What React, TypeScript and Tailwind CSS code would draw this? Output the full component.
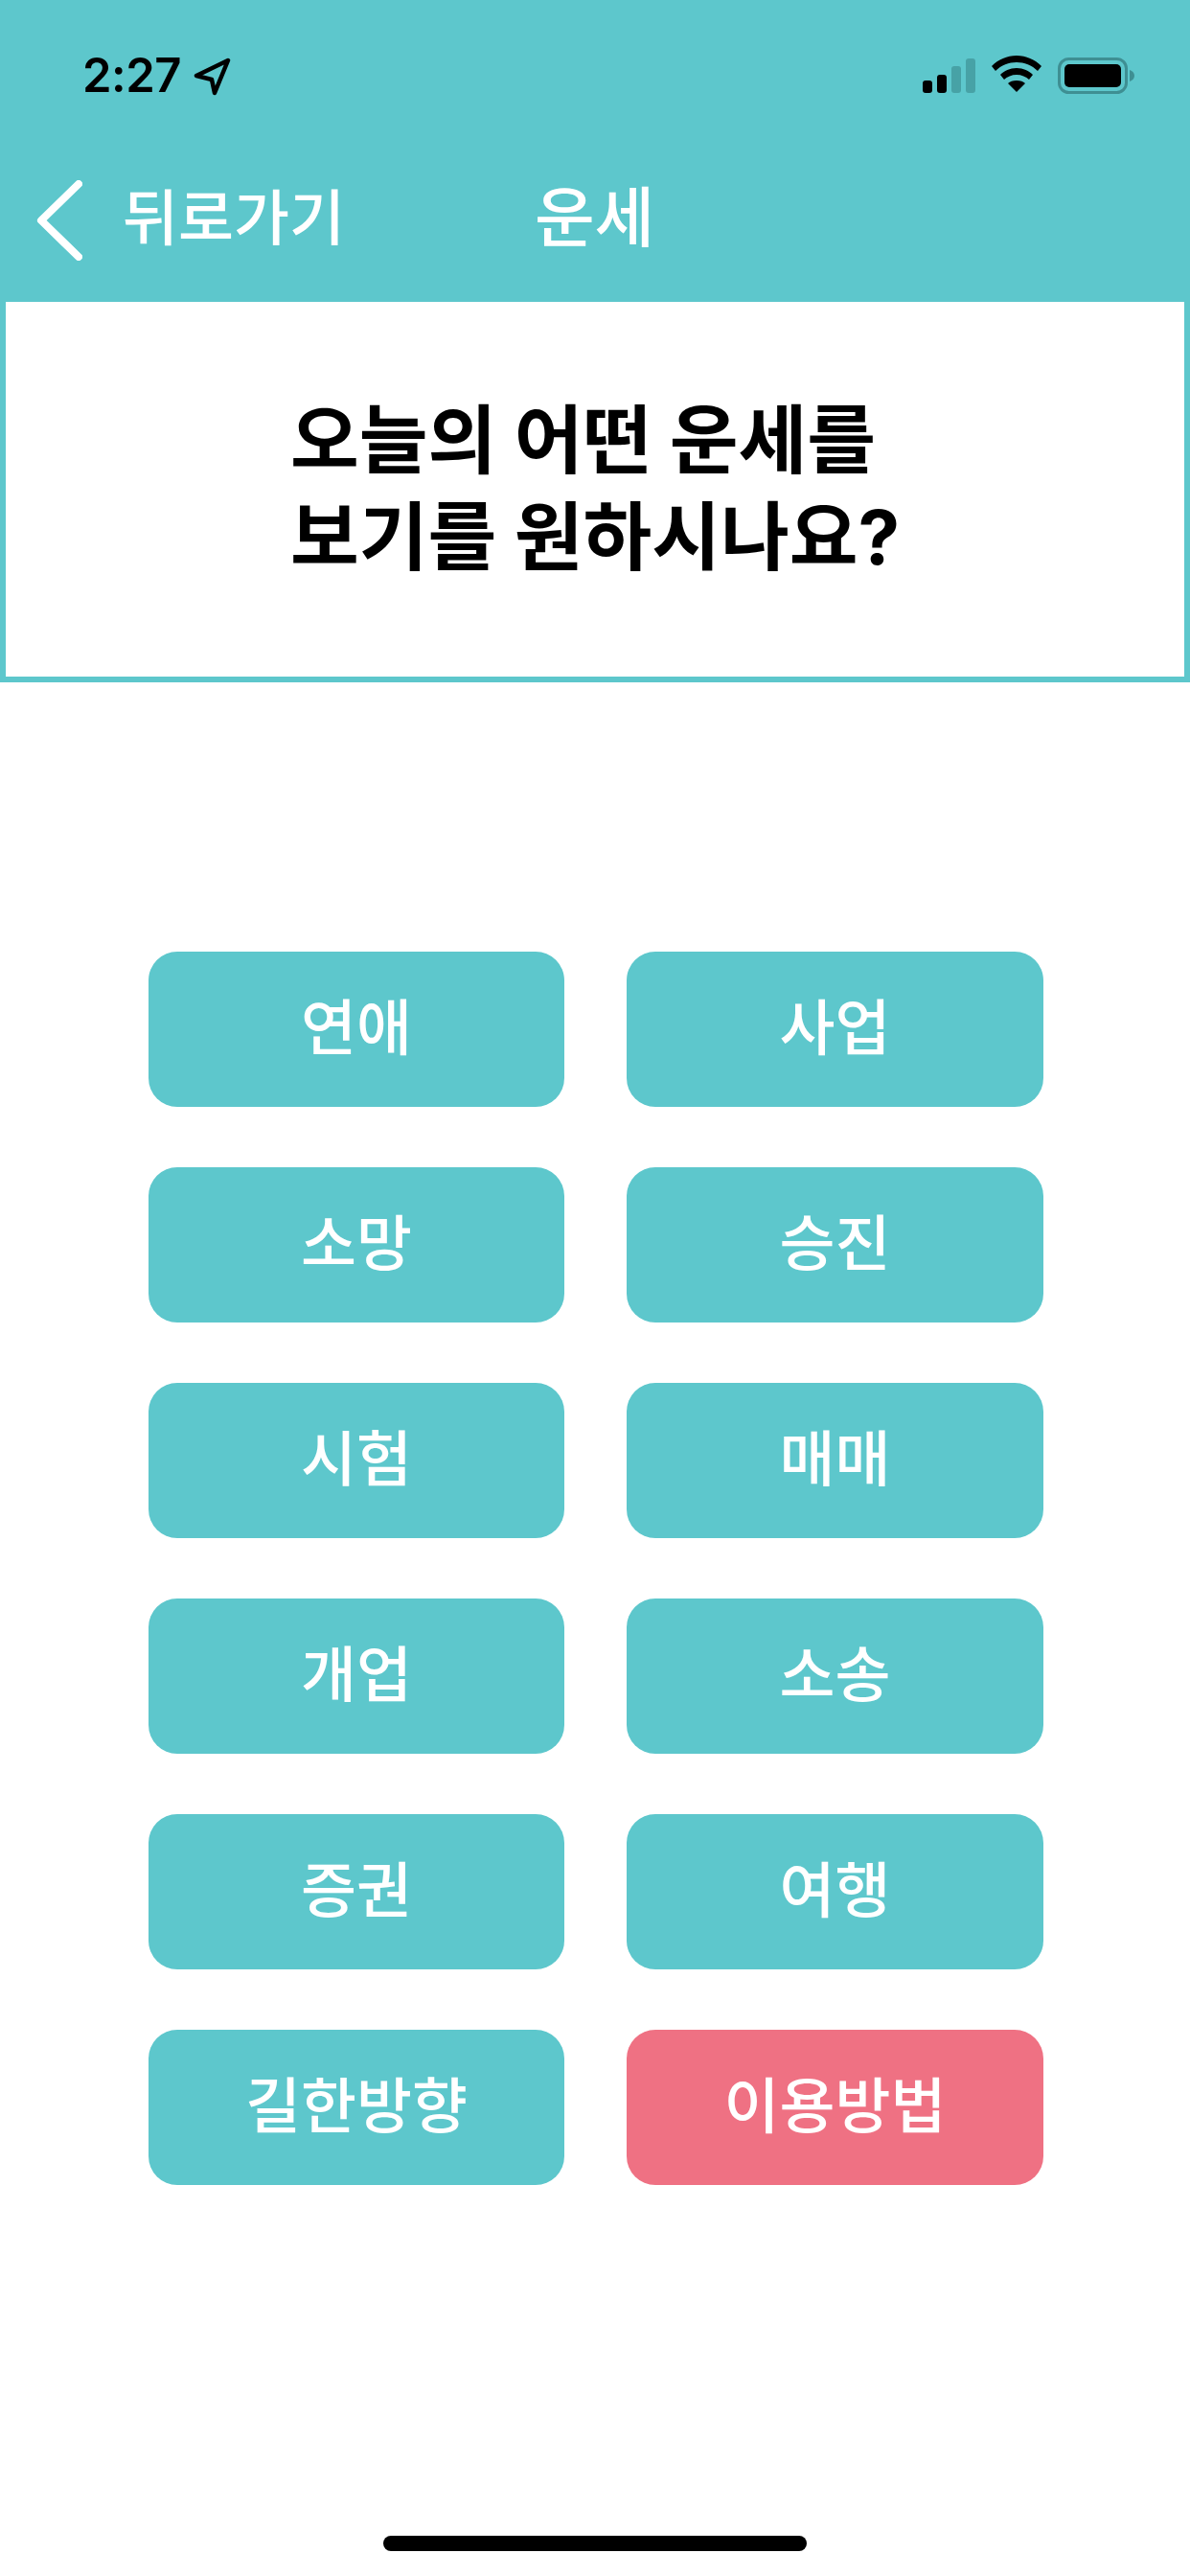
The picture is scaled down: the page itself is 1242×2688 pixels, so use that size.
import { Fragment } from "react";

const FONT = "font-['Inter','Noto_Sans_CJK_KR',sans-serif]";

const rows = [
  ["연애", "사업"],
  ["소망", "승진"],
  ["시험", "매매"],
  ["개업", "소송"],
  ["증권", "여행"],
  ["길한방향", "이용방법"],
];

function StatusIcons() {
  return (
    <div className="flex items-start gap-[17px]">
      {/* signal */}
      <svg width="55" height="36" viewBox="0 0 55 36">
        <rect x="0" y="23" width="10" height="13" rx="3" fill="#000" />
        <rect x="15" y="17" width="10" height="19" rx="3" fill="#000" />
        <rect x="30" y="8" width="10" height="28" rx="3" fill="#47a2a6" />
        <rect x="45" y="0" width="10" height="36" rx="3" fill="#47a2a6" />
      </svg>
      {/* wifi */}
      <svg width="52" height="38" viewBox="0 0 52 38" className="-mt-[3px]">
        <path d="M26 0C16 0 7 4 0 11l4 5C10 10 18 7 26 7s16 3 22 9l4-5C45 4 36 0 26 0Z" fill="#000" />
        <path d="M26 13c-7 0-13 3-17 7l4 5c3-3 8-5 13-5s10 2 13 5l4-5c-4-4-10-7-17-7Z" fill="#000" />
        <path d="M26 26c-4 0-7 1-9 3l9 9 9-9c-2-2-5-3-9-3Z" fill="#000" />
      </svg>
      {/* battery */}
      <svg width="80" height="38" viewBox="0 0 80 38" className="-mt-px">
        <rect x="1.5" y="1.5" width="70" height="35" rx="10" fill="none" stroke="#3e8f93" strokeWidth="3" />
        <rect x="7" y="7" width="59" height="24" rx="5" fill="#000" />
        <path d="M75 13c3 1 5 3 5 6s-2 5-5 6Z" fill="#3e8f93" />
      </svg>
    </div>
  );
}

export default function App() {
  return (
    <div className={`flex h-[2688px] w-[1242px] flex-col bg-white ${FONT}`}>
      <header className="flex h-[315px] flex-col bg-[#5dc7cc]">
        {/* status bar */}
        <div className="flex h-[188px] items-start justify-between pl-[86px] pr-[58px] pt-[61px]">
          <div className="flex items-start gap-[13px]">
            <span className="text-[49px] font-semibold leading-[36px] tracking-[-0.5px] text-black">2:27</span>
            <svg width="40" height="40" viewBox="0 0 40 40" className="-mt-px">
              <path d="M36 3 3 19l16 4 3 14Z" fill="none" stroke="#000" strokeWidth="4.5" strokeLinejoin="round" />
            </svg>
          </div>
          <StatusIcons />
        </div>
        {/* nav */}
        <div className="flex items-start pl-[38px]">
          <svg width="48" height="84" viewBox="0 0 48 84">
            <path d="M44 4 5 42l39 38" fill="none" stroke="#fff" strokeWidth="8" strokeLinecap="round" strokeLinejoin="round" />
          </svg>
          <span className="ml-[42px] mt-[3px] w-[230px] whitespace-nowrap text-[63px] font-medium leading-[72px] text-white">뒤로가기</span>
          <span className="ml-[200px] mt-[3px] whitespace-nowrap text-[68px] font-medium leading-[72px] text-white">운세</span>
        </div>
      </header>

      <section className="flex h-[397px] items-center justify-center border-x-[6px] border-b-[6px] border-[#5dc7cc] pb-[2px]">
        <h1 className="text-left text-[78px] font-bold leading-[101px] text-black">
          오늘의 어떤 운세를
          <br />
          보기를 원하시나요?
        </h1>
      </section>

      <main className="mt-[281px] grid grid-cols-[434px_435px] justify-start gap-x-[65px] gap-y-[63px] pl-[155px]">
        {rows.map(([left, right], i) => (
          <Fragment key={left}>
            <button className="flex h-[162px] items-center justify-center rounded-[30px] bg-[#5dc7cc] pb-[4px] text-[63px] font-medium text-white">
              {left}
            </button>
            <button
              className={`flex h-[162px] items-center justify-center rounded-[30px] pb-[4px] text-[63px] font-medium text-white ${
                i === rows.length - 1 ? "bg-[#ef7183]" : "bg-[#5dc7cc]"
              }`}
            >
              {right}
            </button>
          </Fragment>
        ))}
      </main>

      <div className="mx-auto mt-auto mb-[26px] h-[16px] w-[442px] rounded-full bg-black" />
    </div>
  );
}
